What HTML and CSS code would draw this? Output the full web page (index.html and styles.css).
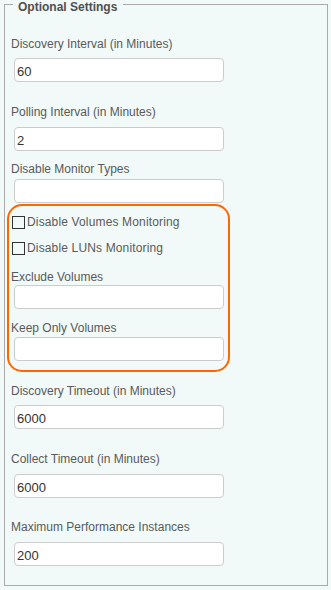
FILE: index.html
```html
<!DOCTYPE html>
<html lang="en">
<head>
    <meta charset="UTF-8">
    <meta name="viewport" content="width=device-width, initial-scale=1">
    <title>Optional Settings</title>
    <link rel="stylesheet" href="styles.css">
</head>
<body>

    <fieldset class="settings">
        <legend>Optional Settings</legend>

        <div class="field first">
            <label for="discoveryInterval">Discovery Interval (in Minutes)</label>
            <input type="text" id="discoveryInterval" value="60">
        </div>

        <div class="field">
            <label for="pollingInterval">Polling Interval (in Minutes)</label>
            <input type="text" id="pollingInterval" value="2">
        </div>

        <div class="field tight">
            <label for="disableTypes">Disable Monitor Types</label>
            <input type="text" id="disableTypes">
        </div>

        <!-- highlighted volume options -->
        <div class="highlight">
            <div class="check-row">
                <input type="checkbox" id="disableVolumes">
                <label for="disableVolumes">Disable Volumes Monitoring</label>
            </div>
            <div class="check-row second">
                <input type="checkbox" id="disableLuns">
                <label for="disableLuns">Disable LUNs Monitoring</label>
            </div>

            <div class="field tight exclude">
                <label for="excludeVolumes">Exclude Volumes</label>
                <input type="text" id="excludeVolumes">
            </div>

            <div class="field tight keep">
                <label for="keepVolumes">Keep Only Volumes</label>
                <input type="text" id="keepVolumes">
            </div>
        </div>

        <div class="field after-box">
            <label for="discoveryTimeout">Discovery Timeout (in Minutes)</label>
            <input type="text" id="discoveryTimeout" value="6000">
        </div>

        <div class="field">
            <label for="collectTimeout">Collect Timeout (in Minutes)</label>
            <input type="text" id="collectTimeout" value="6000">
        </div>

        <div class="field last">
            <label for="maxInstances">Maximum Performance Instances</label>
            <input type="text" id="maxInstances" value="200">
        </div>
    </fieldset>

</body>
</html>
```

FILE: styles.css
```css
* {
    box-sizing: border-box;
}
body {
    margin: 0;
    background: #f1f9f9;
    font-family: "Liberation Sans", Arial, sans-serif;
    font-size: 12px;
    color: #5a5a5a;
}
.settings {
    margin: -5px 3px 0 4px;
    padding: 23px 6px 19px 6px;
    border: 1px solid #aaa;
    min-width: 0;
}
.settings legend {
    margin-left: 2px;
    padding: 6px 6px 0 5px;
    font-size: 12px;
    line-height: 13px;
    font-weight: bold;
    color: #4f4f4f;
}
.field label {
    display: block;
    line-height: 15px;
}
.field input {
    display: block;
    width: 210px;
    height: 24px;
    margin: 7px 0 0 3px;
    padding: 2px 2px 0;
    border: 1px solid #ccc;
    border-radius: 4px;
    background: #fff;
    font-family: "Liberation Sans", Arial, sans-serif;
    font-size: 13px;
    color: #333;
}
.field {
    margin-top: 23px;
}
.field.first {
    margin-top: 0;
}
.field.first input,
.field.after-box input {
    margin-top: 6px;
}
.field.tight {
    margin-top: 11px;
}
.field.tight input {
    margin-top: 2px;
}
.field.last {
    margin-top: 22px;
}
.highlight {
    width: 223px;
    margin: 1px 0 0 -4px;
    padding: 9px 0 9px 2px;
    border: 2px solid #ff6600;
    border-radius: 15px;
}
.check-row {
    display: flex;
    align-items: center;
    height: 15px;
    line-height: 15px;
}
.check-row label {
    margin-left: 1px;
    letter-spacing: 0.15px;
}
.check-row.second {
    margin-top: 11px;
}
.check-row input {
    appearance: none;
    -webkit-appearance: none;
    width: 13px;
    height: 13px;
    margin: 0 1px;
    border: 1px solid #333;
    background: transparent;
}
.field.exclude {
    margin-top: 14px;
}
.field.exclude input {
    margin-top: 0;
}
.field.keep {
    margin-top: 12px;
}
.field.keep input {
    margin-top: 1px;
}
.field.after-box {
    margin-top: 12px;
}
```
